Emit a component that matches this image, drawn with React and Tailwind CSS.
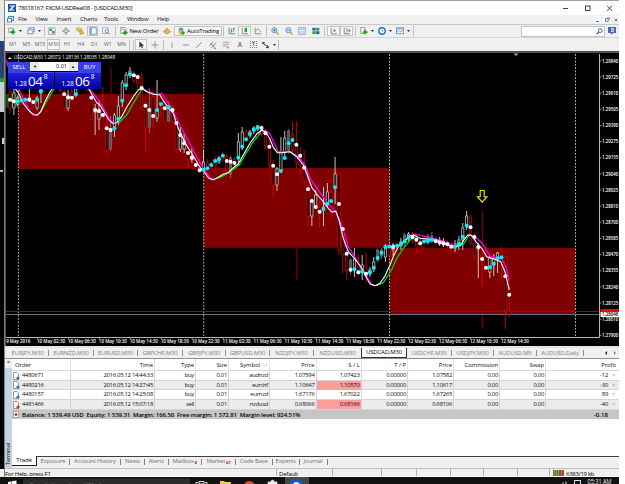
import React from 'react';

const WHITE = '#d8d8d8';
const RED = '#d80000';

// one row per bar: [dot y, dot colour, high, low, body top, body bottom, kind]
// kind: r = bear, w = bull, f = filled grey
const BARS = [
  [99.7, 'w', 88, 113, 92, 108, 'r'], [101.3, 'w', 88, 115, 93, 108, 'w'], [101.3, 'c', 96, 106, 98, 104, 'w'],
  [100.5, 'c', 97, 105, 99, 103, 'r'], [99.7, 'c', 97, 103, 98, 102, 'r'], [99.7, 'w', 89, 102, 98, 101, 'w'],
  [102, 'w', 97, 108, 99, 105, 'r'], [99.7, 'c', 96, 110, 98, 108, 'w'], [91.3, 'c', 88, 103, 89, 93, 'w'],
  [82, 'c', 76, 86, 78, 84, 'w'], [78, 'c', 74, 84, 76, 82, 'w'], [77, 'c', 72, 82, 74, 80, 'w'],
  [79, 'w', 74, 84, 76, 82, 'r'], [84, 'w', 76, 92, 80, 90, 'r'], [94.3, 'w', 89, 109, 92, 108, 'r'],
  [97.3, 'w', 90, 111, 99, 108, 'w'], [97.7, 'w', 88, 101, 92, 99, 'r'], [94.3, 'c', 88, 97, 89, 95, 'w'],
  [84, 'c', 76, 88, 80, 86, 'w'], [80, 'c', 74, 86, 76, 82, 'w'], [84, 'w', 78, 91, 80, 90, 'r'],
  [97.7, 'w', 93, 121, 98, 119, 'r'], [110, 'w', 104, 135, 110, 112, 'w'], [111, 'w', 100, 130, 110, 119, 'w'],
  [115, 'w', 87, 119, 105, 117, 'r'], [128.3, 'w', 112, 156, 131, 150, 'r'], [130, 'w', 116, 151, 129, 149, 'f'],
  [128.3, 'c', 113, 137, 115, 128, 'w'], [119, 'c', 96, 125, 106, 119, 'w'], [100.7, 'c', 80, 107, 83, 100, 'w'],
  [85.3, 'c', 72, 90, 75, 85, 'w'], [74.3, 'c', 67, 78, 71, 75, 'w'], [75.3, 'w', 71, 83, 74, 81, 'r'],
  [77, 'w', 74, 91, 77, 83, 'r'], [88, 'w', 73, 110, 78, 107, 'r'], [105.7, 'w', 103, 153, 106, 127, 'r'],
  [110, 'w', 88, 133, 110, 127, 'f'], [116, 'w', 90, 129, 97, 117, 'r'], [110, 'c', 80, 122, 110, 118, 'w'],
  [104, 'c', 94, 118, 98, 106, 'r'], [108.3, 'w', 101, 122, 104, 121, 'r'], [107, 'c', 101, 122, 108, 121, 'f'],
  [110, 'w', 105, 124, 108, 121, 'r'], [123, 'w', 113, 153, 115, 149, 'r'], [135, 'w', 127, 152, 135, 149, 'w'],
  [143.3, 'w', 133, 153, 140, 149, 'w'], [153, 'w', 144, 168, 149, 159, 'r'], [157.7, 'w', 148, 163, 156, 159, 'w'],
  [165, 'w', 153, 168, 158, 166, 'r'], [170.3, 'w', 157, 173, 164, 171, 'r'], [169.7, 'c', 150, 172, 162, 170, 'w'],
  [168.3, 'c', 159, 170, 163, 169, 'r'], [165, 'c', 162, 169, 164, 167, 'r'], [161, 'c', 156, 169, 159, 166, 'r'],
  [159.3, 'c', 156, 164, 158, 162, 'w'], [155.7, 'c', 152, 162, 154, 159, 'r'], [161, 'w', 154, 177, 157, 170, 'r'],
  [161.7, 'w', 156, 178, 158, 174, 'f'], [163, 'w', 157, 170, 159, 165, 'r'], [157.7, 'c', 133, 166, 142, 157, 'w'],
  [146.7, 'c', 127, 150, 132, 146, 'w'], [139.3, 'c', 129, 143, 132, 140, 'r'], [134, 'c', 130, 138, 132, 135, 'w'],
  [129.7, 'c', 126, 134, 128, 131, 'w'], [127.3, 'c', 125, 131, 126, 129, 'w'], [128, 'w', 125, 136, 127, 134, 'r'],
  [133.3, 'w', 129, 150, 132, 146, 'r'], [146.7, 'w', 139, 169, 147, 165, 'r'], [165.7, 'w', 160, 198, 166, 185, 'r'],
  [174.3, 'w', 167, 191, 169, 185, 'w'], [171, 'c', 137, 173, 152, 171, 'w'], [158, 'c', 131, 159, 138, 152, 'w'],
  [143.3, 'c', 129, 153, 131, 150, 'f'], [140, 'c', 122, 152, 134, 150, 'r'], [144.7, 'w', 121, 169, 145, 162, 'r'],
  [155.7, 'w', 147, 174, 155, 165, 'r'], [167.7, 'w', 150, 184, 168, 181, 'r'], [189.3, 'w', 177, 227, 189, 216, 'r'],
  [201, 'w', 199, 226, 201, 216, 'w'], [207, 'w', 190, 209, 195, 207, 'w'], [211.7, 'w', 200, 227, 208, 213, 'r'],
  [209, 'c', 187, 226, 207, 210, 'w'], [203.7, 'c', 183, 207, 192, 203, 'w'], [201, 'c', 190, 219, 193, 209, 'r'],
  [187.3, 'c', 157, 204, 174, 187, 'w'], [204, 'w', 173, 255, 174, 250, 'r'], [229, 'w', 227, 273, 229, 255, 'r'],
  [253.7, 'w', 250, 280, 254, 271, 'r'], [269.7, 'w', 258, 275, 260, 270, 'f'], [269.3, 'c', 248, 277, 259, 269, 'w'],
  [272.3, 'w', 254, 276, 264, 274, 'r'], [271.7, 'c', 255, 280, 265, 272, 'w'], [273.7, 'w', 253, 283, 266, 275, 'r'],
  [272.3, 'c', 267, 277, 270, 274, 'w'], [267.7, 'c', 257, 272, 262, 269, 'w'], [258, 'c', 249, 262, 250, 260, 'f'],
  [252.7, 'c', 248, 259, 250, 256, 'f'], [247, 'c', 244, 262, 247, 257, 'w'], [246.5, 'c', 243, 259, 246, 255, 'r'],
  [247, 'w', 243, 256, 245, 250, 'w'], [245.7, 'c', 241, 249, 244, 247, 'r'], [244, 'c', 238, 250, 242, 246, 'w'],
  [241.3, 'c', 233, 246, 235, 243, 'f'], [237, 'c', 232, 242, 234, 239, 'w'], [237.3, 'w', 232, 243, 234, 240, 'r'],
  [239.7, 'w', 234, 254, 237, 247, 'r'], [243.3, 'w', 238, 253, 240, 250, 'r'], [241.3, 'c', 236, 250, 238, 244, 'r'],
  [241, 'c', 234, 245, 236, 243, 'f'], [239.7, 'c', 232, 243, 236, 241, 'f'], [241, 'w', 237, 245, 239, 243, 'r'],
  [242.3, 'w', 237, 246, 240, 244, 'w'], [243.3, 'w', 238, 247, 241, 245, 'w'], [244.3, 'w', 240, 248, 242, 246, 'r'],
  [246.7, 'w', 243, 253, 245, 250, 'r'], [246.7, 'c', 240, 252, 244, 248, 'w'], [243.7, 'c', 236, 250, 240, 246, 'w'],
  [237, 'c', 223, 250, 228, 240, 'w'], [225.7, 'c', 211, 230, 216, 226, 'w'], [227.3, 'w', 215, 245, 217, 243, 'r'],
  [237, 'w', 232, 259, 238, 256, 'r'], [247, 'w', 243, 278, 247, 249, 'w'], [259, 'w', 250, 287, 256, 262, 'r'],
  [267.7, 'w', 243, 273, 257, 271, 'r'], [267.3, 'c', 256, 278, 258, 272, 'w'], [263.7, 'c', 254, 276, 259, 265, 'w'],
  [258.3, 'c', 252, 273, 253, 260, 'w'], [257.3, 'c', 247, 282, 253, 262, 'r'], [276.3, 'w', 255, 329, 258, 311, 'r'],
  [294.7, 'w', 302, 317, 311, 314, 'r'],
];

const MA_MAIN = '13,86 18.3,92.7 23.3,103.3 28.3,110 33.3,114.7 37.3,115 40.7,111.7 45,101.7 49.3,93.3 53.3,87.3 58,80 70,76 82,80 88.3,88.3 93.3,96.7 96.7,102.7 100,105 104,111.7 108.3,119.3 112.7,123.3 116.7,122.7 121.7,116.7 126.7,107.3 133.3,96.7 138.3,90 141.7,88.3 146.7,91.7 153.3,94.3 160,95 164,101.7 169,108.3 173.3,113.3 178.3,128.3 185,142.7 193.3,156 200,167.3 203.5,171 208.3,177.7 212.3,179.7 216.7,178.3 223.3,174.3 228.3,172.7 233.3,167.7 238.3,164 243.3,155 250,143.3 256.7,134 261.7,130.3 266,132.3 270,139.3 273.3,147.3 277.3,152.7 281.7,152.7 290,151.7 296.7,156.7 303.3,165 306.7,173.3 311.7,187.3 318.3,196 323.3,201.7 328.3,208.3 332.3,212.3 335.7,211 339,220 343.3,238.3 348.3,251.7 355,259 361.7,268.3 366,276.7 370,284 375,285.7 380,283.3 385,276 390,265 394,255 398.3,246.7 405,240.7 410,236 413.3,235 420,238.3 430,239.3 443.3,242.7 451.7,246.7 460,245.7 465,238.3 468.3,234.7 471.7,235.7 476.7,242.7 481.7,248.3 486.7,256.7 495,259.3 500.7,261.7 505,271.7 509.3,290';

const MA_DOWN = [
  '6,60 8,66 14,80 19.3,90 25,101.7 30,111.7 35,115 38.3,115',
  '90,89.3 98.3,100 101.7,105 110,120 114,123.3',
  '141.7,87.7 146.7,90.7 155,94 161.7,93.3 165,98.3 171.7,108.3 178.3,121.7 188.3,140.7 196.7,156.7 203.3,168.3 210,177.7 213,179.3',
  '261,130.7 266,130.7 270,134 275,145 278.3,151.7 290,151.7 298.3,156.7 305,165 310,178.3 318.3,190 326.7,201.7 336.7,213.3 340,220.7 343.3,229.7 348.3,246.7 356.7,260 366,275 371.7,284 375,285.7',
  '413.3,234 421.7,235.7 430,237.7 443.3,241 454,245',
  '469.3,234 475,236.7 481.7,242.7 486,249.3 490,256 501.7,258.7 506,266.7 509.3,280.7',
];

const MA_UP = [
  '39.5,113.5 43,108 48.3,98.3 53.3,90 58,83',
  '119,122.7 126.7,115 133.3,103.3 138.3,95 141.7,89.3',
  '213,179.7 221.7,176.7 230,171.7 239.3,165 245,155 253.3,141.7 261,132.3',
  '376,285.7 383.3,282.7 388.3,275 391.7,269.5 396.7,258.3 403.3,248.3 411.7,238.3',
  '457,246.3 463.3,244.3 469.3,235',
];

const PRICES = ['1.29840', '1.29725', '1.29610', '1.29505', '1.29390', '1.29275', '1.29155', '1.29040', '1.28925', '1.28810', '1.28700', '1.28585', '1.28470', '1.28355', '1.28240', '1.28125', '1.28010', '1.27900'];

const HOURS = ['02:30', '06:30', '10:30', '14:30', '18:30', '22:30'];
const TIMES = [
  ...HOURS.map((h) => `10 May ${h}`),
  ...HOURS.map((h) => `11 May ${h}`),
  ...HOURS.slice(0, 4).map((h) => `12 May ${h}`),
];

const Bar = ({ bar, index }) => {
  const [, , high, low, top, bottom, kind] = bar;
  const x = 10 + index * 3.87;
  const color = kind === 'r' ? RED : kind === 'w' ? WHITE : '#777777';
  return (
    <g stroke={color}>
      <line x1={x} x2={x} y1={high} y2={low} strokeWidth="0.9" />
      <rect x={x - 1.1} y={top} width="2.2" height={Math.max(bottom - top, 1)} fill={kind === 'f' ? '#555555' : '#000000'} strokeWidth="0.7" />
    </g>
  );
};

const Chart = () => (
  <svg className="block" width="613" height="293" viewBox="6 53 613 293" fontFamily="'Open Sans', sans-serif">
    <rect x="6" y="53" width="613" height="293" fill="#000000" />
    <rect x="6" y="94" width="12.3" height="13.5" fill="#005a00" />
    <g fill="#800000">
      <rect x="18.3" y="94" width="185.4" height="75" />
      <rect x="203.7" y="168" width="185.8" height="79.8" />
      <rect x="389.5" y="248" width="185.8" height="66" />
    </g>
    <path d="M111 67v40M296.8 248v32M482.3 211v76M482.3 314v15" fill="none" stroke="#960000" />
    <g stroke="#c8c8c8" strokeWidth="0.9" strokeDasharray="1.8 1.5">
      <line x1="18.4" x2="18.4" y1="54" y2="336" />
      <line x1="203.7" x2="203.7" y1="54" y2="336" />
      <line x1="389.5" x2="389.5" y1="54" y2="336" />
      <line x1="575.5" x2="575.5" y1="54" y2="336" />
    </g>
    <line x1="6" x2="599" y1="311.5" y2="311.5" stroke="#b00000" />
    <line x1="6" x2="599" y1="314.5" y2="314.5" stroke="#66727e" />
    {BARS.map((bar, i) => <Bar key={i} bar={bar} index={i} />)}
    <g fill="none" strokeWidth="1.3" strokeLinejoin="round">
      {MA_DOWN.map((points) => <polyline key={points} points={points} stroke="#f000f0" />)}
      {MA_UP.map((points) => <polyline key={points} points={points} stroke="#00d800" />)}
      <polyline points={MA_MAIN} stroke="#ffffff" strokeWidth="1.1" />
    </g>
    {BARS.map((bar, i) => (
      <circle key={i} cx={10 + i * 3.87} cy={bar[0]} r="2" fill={bar[1] === 'c' ? '#00f0ff' : '#ffffff'} />
    ))}
    <path d="M480.2 190.5h4v6.2h2.8l-4.8 5.4-4.8-5.4h2.8z" fill="none" stroke="#f4e800" strokeWidth="1.1" />
    <path d="M513.5 53.5h5l-2.5 2.5z" fill="#9aaac0" />
    <path d="M6 337.5H599.5V54" fill="none" stroke="#b4b4b4" />
    <path d="M8 59l1.8-2 1.8 2z" fill="#ffffff" />
    <text x="14" y="59" fontSize="5" fill="#ffffff" textLength="101" lengthAdjust="spacingAndGlyphs">USDCAD,M30  1.28072 1.28136 1.28035 1.28048</text>
    {PRICES.map((price, i) => (
      <g key={price}>
        <line x1="600" x2="601.5" y1={60.8 + i * 16.15} y2={60.8 + i * 16.15} stroke="#b4b4b4" strokeWidth="0.8" />
        <text x="602" y={62.5 + i * 16.15} fontSize="4.4" fontWeight="600" fill="#ffffff">{price}</text>
      </g>
    ))}
    <rect x="600.5" y="309" width="18.5" height="3.5" fill="#ff0000" />
    <rect x="600.5" y="312" width="18.5" height="5" fill="#ffffff" />
    <text x="602" y="316.2" fontSize="4.4" fontWeight="600" fill="#000000">1.28048</text>
    <text x="6.2" y="343.2" fontSize="5" fontWeight="600" fill="#ffffff" textLength="24" lengthAdjust="spacingAndGlyphs">9 May 2016</text>
    {TIMES.map((time, i) => (
      <g key={time}>
        <line x1={37.5 + i * 30.93} x2={37.5 + i * 30.93} y1="337.5" y2="339" stroke="#b4b4b4" strokeWidth="0.8" />
        <text x={37 + i * 30.93} y="343.2" fontSize="5" fontWeight="600" fill="#ffffff" textLength="28" lengthAdjust="spacingAndGlyphs">{time}</text>
      </g>
    ))}
  </svg>
);

const Quote = ({ big }) => (
  <div className="flex-1 flex items-end justify-center pb-[1px] border-t border-[#3c46f0] bg-gradient-to-b from-[#2020d8] to-[#0000a0] text-white leading-none">
    <span className="text-[6.3px] mb-[1px] mr-[1px]">1.28</span>
    <span className="text-[13.5px] leading-[13px] tracking-[-0.3px]">{big}</span>
    <span className="text-[6.5px] self-start mt-[1px] ml-[1px]">8</span>
  </div>
);

const OneClick = () => (
  <div className="absolute left-[2px] top-[9px] w-[93px] h-[27px] flex flex-col bg-black">
    <div className="h-[10px] flex text-[6px] leading-[10px] text-white">
      <div className="w-[22px] text-center bg-[#3840e8]">SELL</div>
      <div className="w-[48px] h-[9px] flex bg-white text-black px-px leading-[9px]">
        <span className="w-[8px] bg-[#e6e6e6] text-center text-[4px]">▼</span>
        <span className="flex-1 text-right pr-[2px] text-[5.5px]">0.01</span>
        <span className="w-[8px] bg-[#e6e6e6] text-center text-[4px]">▲</span>
      </div>
      <div className="flex-1 text-center bg-[#3840e8]">BUY</div>
    </div>
    <div className="flex-1 flex gap-px">
      <Quote big="04" />
      <Quote big="06" />
    </div>
  </div>
);

// toolbar glyphs, all drawn on a 10x10 grid
const ICONS = {
  newChart: <><rect x="1" y="1.5" width="6" height="5" fill="#fff" stroke="#68a068" /><path d="M6 3.5v6M3 6.5h6" stroke="#18a028" strokeWidth="2.2" /></>,
  profiles: <><rect x="2.5" y="1" width="6.5" height="5" fill="#dcecf8" stroke="#5888b8" /><rect x="1" y="3.5" width="6.5" height="5" fill="#eef6fc" stroke="#5888b8" /></>,
  market: <><rect x="1" y="1" width="8" height="8" fill="#f4faff" stroke="#68a8c8" /><rect x="2" y="2" width="3" height="3" fill="#28a040" /><rect x="5" y="5" width="3" height="3" fill="#d04820" /></>,
  crosshair: <g fill="none" stroke="#808080"><circle cx="5" cy="5" r="2.8" /><path d="M5 0v4M5 6v4M0 5h4M6 5h4" /></g>,
  navigator: <><path d="M1 1h3l1 1h2v3H1z" fill="#f0cc50" stroke="#b09020" strokeWidth=".7" /><path d="M4.5 4.5h3l2 4-4.5.5z" fill="#f0b840" stroke="#a07818" strokeWidth=".7" /></>,
  terminal: <><rect x="1" y="1" width="8" height="8" fill="#fff" stroke="#5080c0" /><path d="M2.5 1v8" stroke="#5080c0" strokeWidth="1.5" /></>,
  tester: <><rect x=".5" y="1" width="7" height="7" fill="#eef4fa" stroke="#88a8c8" /><circle cx="6" cy="5.5" r="2" fill="#fff" stroke="#607890" /><path d="M7.5 7l2 2" stroke="#c0a030" strokeWidth="1.4" /></>,
  order: <><path d="M1 .5h5l1.5 1.5V8H1z" fill="#fff" stroke="#606060" strokeWidth=".8" /><path d="M2.5 3h3" stroke="#777" /><path d="M6.5 4v6M3.5 7h6" stroke="#18a028" strokeWidth="2" /></>,
  editor: <path d="M.5 6L5 1.5 9.5 6 5 8.5z" fill="#e8b838" stroke="#a07818" strokeWidth=".8" />,
  auto: <><circle cx="5" cy="3.5" r="3" fill="#48a0d0" /><path d="M1 5l4-1 4 2-2 3.5H2.5z" fill="#e8c040" /><circle cx="7.5" cy="7.5" r="2.2" fill="#20a040" /></>,
  bars: <path d="M1.5 1v7.5H9M4.5 2v5M3.5 5h1M7 1v5M7 2h1.5" fill="none" stroke="#308038" />,
  candles: <><path d="M1.5 1v7.5H9" fill="none" stroke="#607060" /><rect x="4.5" y="1" width="3" height="5.5" fill="#18a828" /></>,
  line: <path d="M1.5 1v7.5H9M2 5l2.5-2.5L7 4.5l2 2" fill="none" stroke="#589060" />,
  zoomIn: <><path d="M6 6l3.5 3.5" stroke="#c8a030" strokeWidth="1.8" /><circle cx="4.2" cy="4" r="3.2" fill="#d8f0fc" stroke="#3080c8" /><path d="M2.5 4h3.4M4.2 2.3v3.4" stroke="#2060a8" /></>,
  zoomOut: <><path d="M6 6l3.5 3.5" stroke="#c8a030" strokeWidth="1.8" /><circle cx="4.2" cy="4" r="3.2" fill="#d8f0fc" stroke="#3080c8" /><path d="M2.5 4h3.4" stroke="#2060a8" /></>,
  grid: <><rect x="1" y="1" width="8" height="8" fill="#eaf4fc" stroke="#6098c8" /><path d="M2 3h6M4 5v3M6.5 5v3" stroke="#90b8d8" /></>,
  tile: <><rect x=".5" y="1" width="4" height="3.5" fill="#2858b8" /><rect x="5.2" y="1" width="4" height="3.5" fill="#28a030" /><rect x=".5" y="5.3" width="4" height="3.5" fill="#28a030" /><rect x="5.2" y="5.3" width="4" height="3.5" fill="#2858b8" /></>,
  scroll: <><path d="M1.5 1v7.5H9" fill="none" stroke="#607060" /><path d="M4.5 2.5v4l3-2z" fill="#18a028" /></>,
  shift: <><path d="M1.5 1v7.5H9M5 1v6" fill="none" stroke="#506070" /><path d="M9 2.5v4l-3-2z" fill="#c05028" /></>,
  indicator: <><path d="M1 .5h5V8H1z" fill="#fff" stroke="#606060" strokeWidth=".8" /><path d="M6.5 3.5v6M3.5 6.5h6" stroke="#18b028" strokeWidth="2.2" /></>,
  clock: <><circle cx="5" cy="5" r="4" fill="#fff" stroke="#2070c8" strokeWidth="1.7" /><path d="M5 2.8V5h1.8" fill="none" stroke="#406080" strokeWidth=".8" /></>,
  template: <><rect x=".5" y="1" width="9" height="7.5" fill="#e4f2fc" stroke="#5890c0" /><path d="M1 2.2h8" stroke="#5890c0" /><path d="M1.5 6l2-2 2 2 3-2" fill="none" stroke="#b06040" strokeWidth=".8" /></>,
  cursor: <path d="M3 .5v8l2-2 1.3 3 1.2-.6L6.2 6H9z" fill="#303030" />,
  cross: <path d="M5 .5v9M.5 5h9" stroke="#707070" strokeWidth=".9" />,
  vline: <path d="M5 1.5v7" stroke="#808080" />,
  hline: <path d="M1.5 5h7" stroke="#707070" />,
  trend: <path d="M1.5 8.5l7-7" stroke="#707070" />,
  channel: <path d="M.5 6l5-5M3 8.5L9 2M2 3l4 4M7 7v2.5h2" fill="none" stroke="#606060" strokeWidth=".9" />,
  fibo: <path d="M1 1.5h8M1 4h8M1 6.5h5M7 6.5v3M6 8h3" stroke="#808080" strokeWidth=".8" />,
  arrows: <path d="M1 2l3 3M1 2h2.5M1 2v2M4 5l4 2.5M5 8l3 .5-1-3" fill="none" stroke="#303030" strokeWidth="1.2" />,
};

const Icon = ({ name }) => (
  <svg className="w-[8px] h-[8px] shrink-0" viewBox="0 0 10 10">{ICONS[name]}</svg>
);

const Tool = ({ icon, width, boxed, caret, children }) => (
  <div className={`${width} h-full flex items-center justify-center shrink-0 text-[5.2px] text-[#606060] ${boxed ? 'bg-[#f8f8f8] border border-[#c4c4c4]' : ''}`}>
    {icon && <Icon name={icon} />}
    {children}
    {caret && <svg className="w-[3px] h-[2px] ml-[3px]" viewBox="0 0 3 2"><path d="M0 0h3L1.5 2z" fill="#303030" /></svg>}
  </div>
);

const Divider = ({ margin = 'mx-[1px]' }) => <div className={`w-px h-[10px] bg-[#c0c0c0] shrink-0 ${margin}`} />;

const MENU = [['File', 'w-[17.5px]'], ['View', 'w-[21px]'], ['Insert', 'w-[23.5px]'], ['Charts', 'w-[24px]'], ['Tools', 'w-[23px]'], ['Window', 'w-[30px]'], ['Help', 'w-[20px]']];

const CHART_TABS = [
  ['EURJPY,M30', 'w-[44px] pl-[2px]'], ['EURNZD,M30', 'w-[45px]'], ['EURUSD,M30', 'w-[44px]'], ['GBPCHF,M30', 'w-[45px]'],
  ['GBPJPY,M30', 'w-[43px]'], ['GBPUSD,M30', 'w-[44px]'], ['NZDJPY,M30', 'w-[44px]'], ['NZDUSD,M30', 'w-[47px]'],
  ['USDCAD,M30', 'w-[46px]'], ['USDCHF,M30', 'w-[45px]'], ['USDJPY,M30', 'w-[42px]'], ['AUDUSD,M5', 'w-[43px]'], ['AUDUSD,Daily', 'w-[47px]'],
];

const TERMINAL_TABS = [
  ['Exposure', 'w-[33px]'], ['Account History', 'w-[51px]'], ['News', 'w-[24px]'], ['Alerts', 'w-[23.5px]'], ['Mailbox', 'w-[33.5px]', '8'],
  ['Market', 'w-[34px]', '67'], ['Code Base', 'w-[36.5px]'], ['Experts', 'w-[27px]'], ['Journal', 'w-[28px]'],
];

const ORDERS = [
  ['4480671', '2016.05.12 14:44:33', 'buy', '0.01', 'audnzd', '1.07594', '1.07423', '0.00000', '1.07582', '0.00', '0.00', '-12'],
  ['4480216', '2016.05.12 14:27:45', 'buy', '0.01', 'eurchf', '1.10647', '1.10570', '0.00000', '1.10617', '0.00', '0.00', '-30'],
  ['4480157', '2016.05.12 14:25:08', 'buy', '0.01', 'eurnzd', '1.67176', '1.67022', '0.00000', '1.67265', '0.00', '0.00', '89'],
  ['4481466', '2016.05.12 15:07:18', 'sell', '0.01', 'nzdusd', '0.68066', '0.68166', '0.00000', '0.68106', '0.00', '0.00', '-40'],
];

const HEADERS = ['Order', 'Time', 'Type', 'Size', 'Symbol', 'Price', 'S / L', 'T / P', 'Price', 'Commission', 'Swap', 'Profit'];
const COLS = 'grid grid-cols-[59px_84px_41px_33px_41px_46.5px_45px_46.5px_46px_46px_46px_1fr]';

const OrderIcon = ({ color }) => (
  <svg className="w-[7px] h-[8px] mr-[2px] shrink-0" viewBox="0 0 7 8">
    <path d="M.5.5h3.5l1.5 1.5v5.5h-5z" fill="#fff" stroke="#707070" strokeWidth=".7" />
    <circle cx="5" cy="6" r="1.6" fill={color} />
  </svg>
);

const OrdersTable = () => (
  <div className="flex-1 bg-white text-[5.9px] leading-[9px] text-[#101010]">
    <div className={`${COLS} h-[12px] leading-[12px] border-b border-[#d8d8d8]`}>
      {HEADERS.map((title, i) => (
        <div key={i} className={`tracking-[-0.05px] border-r border-[#e4e4e4] ${i === 0 ? 'pl-[3px]' : i === 4 ? 'text-right pr-[9px] relative' : i === 11 ? 'text-right pr-[3px] border-r-0' : 'text-right pr-[1px]'}`}>
          {title}
          {i === 4 && <span className="absolute right-[3px] text-[#999]">⁄</span>}
        </div>
      ))}
    </div>
    {ORDERS.map((order, row) => (
      <div key={order[0]} className={`${COLS} h-[9.7px] tracking-[-0.28px] border-b border-[#d4d4d4] ${row % 2 ? 'bg-[#ececec]' : 'bg-white'}`}>
        {order.map((value, i) => (
          <div
            key={i}
            className={`flex items-center border-r border-[#d4d4d4] ${i === 0 ? 'pl-[1px]' : 'justify-end pr-[1px]'} ${i === 6 && row % 2 ? 'bg-[#ff9c9c]' : ''} ${i === 11 ? 'border-r-0' : ''}`}
          >
            {i === 0 && <OrderIcon color={row === 3 ? '#d83010' : '#1878d0'} />}
            {value}
            {i === 11 && <span className="w-[10px] pl-[4px] text-[#999]">×</span>}
          </div>
        ))}
      </div>
    ))}
    <div className="h-[9px] flex items-center bg-[#c6c6c6] pl-[1px] text-[6.1px] font-semibold text-black">
      <svg className="w-[7px] h-[7px] mr-[2px]" viewBox="0 0 7 7"><rect x=".5" y=".5" width="5" height="6" fill="#fff" stroke="#888" strokeWidth=".6" /><path d="M3 2v3M1.5 3.5h3" stroke="#e02000" strokeWidth="1.3" /></svg>
      <span className="whitespace-pre tracking-[-0.14px]">Balance: 1 539.49 USD  Equity: 1 539.31  Margin: 166.50  Free margin: 1 372.81  Margin level: 924.51%</span>
      <span className="ml-auto pr-[11px]">-0.18</span>
    </div>
  </div>
);

const TitleBar = () => (
  <div className="h-[15px] flex items-center border-t border-[#a0a0a0] bg-white pl-[3px]">
    <svg className="w-[8px] h-[8px]" viewBox="0 0 8 8"><rect width="8" height="8" fill="#1858b0" /><path d="M2 2h4L2 6h4" fill="none" stroke="#fff" strokeWidth="1.2" /></svg>
    <span className="ml-[2px] text-[6px] text-black tracking-[-0.3px]">78018167: FXCM-USDReal08 - [USDCAD,M30]</span>
    <svg className="ml-auto mr-[6px] w-[50px] h-[6px]" viewBox="0 0 50 6" fill="none" stroke="#303030" strokeWidth="0.9">
      <path d="M0 3.5h5" /><rect x="22.5" y="1" width="4.5" height="4.5" /><path d="M44 .8l5 5M49 .8l-5 5" />
    </svg>
  </div>
);

const MenuBar = () => (
  <div className="h-[9px] flex items-center bg-[#f0f0f0] text-[6px] leading-[9px] text-[#101010] pl-[2px]">
    <svg className="w-[7px] h-[7px] mr-[4px]" viewBox="0 0 7 7"><rect x="1.5" y=".5" width="5" height="4" fill="#c8e0f4" stroke="#4888c0" /><rect x=".5" y="2.5" width="4" height="3.5" fill="#fff" stroke="#4888c0" /></svg>
    {MENU.map(([label, width]) => <span key={label} className={`${width} tracking-[-0.2px]`}>{label}</span>)}
    <div className="ml-auto flex gap-[2px]">
      <span className="w-[8px] h-[7px] bg-white flex items-end justify-center"><i className="w-[3px] h-px mb-[1px] bg-[#506888]" /></span>
      <span className="w-[8px] h-[7px] bg-white flex items-center justify-center"><svg className="w-[5px] h-[5px]" viewBox="0 0 5 5" fill="none" stroke="#506888" strokeWidth=".8"><rect x=".5" y="1.8" width="2.6" height="2.6" /><path d="M2 .8h2.5v2" /></svg></span>
      <span className="w-[6px] h-[7px] bg-white flex items-center justify-center"><svg className="w-[4px] h-[4px]" viewBox="0 0 4 4" stroke="#506888" strokeWidth=".9"><path d="M.5.5l3 3M3.5.5l-3 3" /></svg></span>
    </div>
  </div>
);

const MainToolbar = () => (
  <div className="h-[14px] flex items-center border-t border-[#c8c8c8] border-b border-b-[#d4d4d4] bg-[#f0f0f0] py-px">
    <Tool width="w-[20px]" icon="newChart" caret />
    <Tool width="w-[17px]" icon="profiles" caret />
    <Divider margin="ml-[2px] mr-[0px]" />
    <Tool width="w-[14px]" icon="market" />
    <Tool width="w-[13px]" icon="crosshair" />
    <Tool width="w-[15px]" icon="navigator" />
    <Tool width="w-[11px]" icon="terminal" boxed />
    <Tool width="w-[16px]" icon="tester" />
    <Divider margin="ml-[1px] mr-[2px]" />
    <Tool width="w-[42px]" icon="order"><span className="ml-[2px] text-[6px] whitespace-nowrap text-black tracking-[-0.2px]">New Order</span></Tool>
    <Tool width="w-[14px]" icon="editor" />
    <Tool width="w-[48px]" icon="auto" boxed><span className="ml-[2px] text-[6px] text-black tracking-[-0.2px]">AutoTrading</span></Tool>
    <Divider margin="ml-[1px] mr-[2px]" />
    <Tool width="w-[12px]" icon="bars" />
    <Tool width="w-[13px]" icon="candles" boxed />
    <Tool width="w-[14px]" icon="line" />
    <Divider margin="ml-[1px] mr-[1px]" />
    <Tool width="w-[14px]" icon="zoomIn" />
    <Tool width="w-[13px]" icon="zoomOut" />
    <Tool width="w-[14px]" icon="grid" />
    <Tool width="w-[14px]" icon="tile" />
    <Divider margin="ml-[1px] mr-[2px]" />
    <Tool width="w-[13px]" icon="scroll" boxed />
    <Tool width="w-[13px]" icon="shift" boxed />
    <Divider margin="ml-[2px] mr-[2px]" />
    <Tool width="w-[18px]" icon="indicator" caret />
    <Tool width="w-[18px]" icon="clock" caret />
    <Tool width="w-[18px]" icon="template" caret />
    <Divider />
    <div className="ml-auto w-[84px] h-[11px] bg-white border border-[#c4c4c4] flex items-center justify-end pr-[1px] shrink-0">
      <svg className="w-[7px] h-[7px]" viewBox="0 0 7 7" fill="none" stroke="#2868c8"><circle cx="4.2" cy="2.6" r="1.9" /><path d="M2.8 4L.6 6.3" strokeWidth="1.3" /></svg>
    </div>
    <div className="w-[14px] flex justify-center">
      <svg className="w-[8px] h-[8px]" viewBox="0 0 8 8"><path d="M0 0h8v6H5L3 8V6H0z" fill="#4868a8" /><path d="M3 1.5h2.3v3H3M3 3h2" fill="none" stroke="#fff" strokeWidth=".8" /></svg>
    </div>
  </div>
);

const PERIODS = ['M1', 'M5', 'M15', 'M30', 'H1', 'H4', 'D1', 'W1', 'MN'];

const DrawToolbar = () => (
  <div className="h-[13px] flex items-center bg-[#f0f0f0] py-px pl-[1px]">
    {PERIODS.map((period) => <Tool key={period} width="w-[13.6px]" boxed={period === 'M30'}>{period}</Tool>)}
    <Divider margin="ml-[1px] mr-[3px]" />
    <Divider margin="mr-[1px]" />
    <Tool width="w-[12px]" icon="cursor" boxed />
    <Tool width="w-[15px]" icon="cross" />
    <Divider margin="mx-[1px]" />
    <Tool width="w-[14px]" icon="vline" />
    <Tool width="w-[13px]" icon="hline" />
    <Tool width="w-[14px]" icon="trend" />
    <Tool width="w-[13px]" icon="channel" />
    <Tool width="w-[14px]" icon="fibo" />
    <Tool width="w-[13px]"><span className="text-[6.5px] font-semibold">A</span></Tool>
    <Tool width="w-[14px]"><span className="w-[7px] h-[7px] border border-dotted border-[#808080] text-[5px] leading-[5px] text-center font-bold">T</span></Tool>
    <Tool width="w-[18px]" icon="arrows" caret />
    <Divider margin="ml-[0px]" />
  </div>
);

const ChartTabs = () => (
  <div className="h-[13px] flex items-center border-t-2 border-[#e4e4e4] border-b border-b-[#909090] bg-[#f0f0f0] text-[6px] leading-[9px] text-[#808080] tracking-[-0.2px]">
    {CHART_TABS.map(([label, width], i) => (
      <div key={label} className={`${width} shrink-0 flex items-center justify-center h-full ${i === 8 ? 'bg-white text-black border border-t-0 border-[#303030]' : ''}`}>
        <span className="flex-1 text-center">{label}</span>
        {i !== 7 && i !== 8 && <i className="w-px h-[6px] bg-[#909090]" />}
      </div>
    ))}
    <svg className="ml-auto mr-[2px] w-[13px] h-[4px]" viewBox="0 0 13 4"><path d="M3 0v4L1 2z" fill="#202020" /><path d="M10 0v4l2-2z" fill="#808080" /></svg>
  </div>
);

const Terminal = () => (
  <div className="h-[109px] flex bg-[#f0f0f0]">
    <div className="w-[7px] flex flex-col items-center justify-between bg-[#c4d4e4]">
      <div className="w-full h-[9px] bg-[#f0f0f0] text-center text-[6px] leading-[6px] text-black">×</div>
      <span className="[writing-mode:vertical-rl] rotate-180 text-[5.8px] leading-[7px] mb-[3px] tracking-[-0.2px] text-black">Terminal</span>
    </div>
    <div className="flex-1 flex flex-col min-w-0">
      <OrdersTable />
      <div className="h-[12px] flex items-start text-[6px] leading-[9px] text-[#707070] tracking-[-0.15px]">
        <div className="w-[25px] h-[10px] bg-white border-r border-b border-[#202020] text-black text-center shrink-0">Trade</div>
        <div className="flex-1 h-[10px] flex border-t border-[#404040]">
          {TERMINAL_TABS.map(([label, width, badge]) => (
            <div key={label} className={`${width} flex items-center shrink-0`}>
              <span className="flex-1 text-center whitespace-nowrap">
                {label}
                {badge && <sub className="ml-[1px] text-[4px] leading-none font-bold text-red-600">{badge}</sub>}
              </span>
              <i className="w-px h-[6px] bg-[#808080]" />
            </div>
          ))}
        </div>
      </div>
    </div>
  </div>
);

const STATUS_CELLS = ['w-[56px]', 'w-[49px]', 'w-[35px]', 'w-[34px]', 'w-[33px]', 'w-[34px]', 'w-[32px]'];

const StatusBar = () => (
  <div className="h-[8px] flex border-t border-[#c0c0c0] bg-[#f0f0f0] text-[6px] leading-[11px] text-black overflow-hidden">
    <div className="w-[272px] border-r border-[#b0b0b0] tracking-[-0.25px]">For Help, press F1</div>
    {STATUS_CELLS.map((width, i) => (
      <div key={i} className={`${width} border-r border-[#b0b0b0] pl-[2px] shrink-0 tracking-[-0.2px]`}>{i === 0 && 'Default'}</div>
    ))}
    <div className="flex pl-[3px]">
      <svg className="w-[11px] h-[6px] mt-[1px] mr-[2px]" viewBox="0 0 11 6"><rect width="7" height="6" fill="#587820" /><rect x="7" width="4" height="6" fill="#b83828" /><path d="M1.5 0v6M3.5 0v6M5.5 0v6M8.5 0v6" stroke="#d8e0b0" strokeWidth=".4" /></svg>
      <span className="tracking-[-0.3px]">6383/19 kb</span>
    </div>
  </div>
);

const Taskbar = () => (
  <div className="h-[7px] w-[619px] flex bg-[#101212] overflow-hidden">
    <svg className="w-[619px] h-[7px]" viewBox="0 0 619 7" fontFamily="'Open Sans', sans-serif">
      <rect x="23" y="1.5" width="167" height="6" fill="#2b2d2d" />
      <path d="M8 5l3.5-.7V7H8zM12 4.2l4.5-.8V7H12z" fill="#ffffff" />
      <text x="30" y="9.6" fontSize="6" fill="#9a9a9a">Search the web and Windows</text>
      <path d="M196 7V5.5h2M205 5.5h2V7M199 4.5h5V7h-5z" fill="none" stroke="#e0e0e0" />
      <path d="M220 4h4l1 1h6v2h-11z" fill="#f4cc40" />
      <path d="M244.5 7a5 4.5 0 0 1 9.5 0z" fill="#e04838" />
      <path d="M268 7V5h9v2zM270.5 5q2-4 4 0" fill="#e8e8e8" stroke="#e8e8e8" strokeWidth=".7" />
      <rect x="285" y="0" width="24" height="7" fill="#464848" />
      <path d="M290.5 7q0-5 6-5t6 5z" fill="#1458c8" /><path d="M293 7q3-4 7 0z" fill="#fff" />
      <path d="M563 7V5.5M566 7V4.5" stroke="#e0e0e0" /><rect x="574.5" y="3.5" width="6" height="4" fill="none" stroke="#e0e0e0" />
      <text x="587.5" y="6.6" fontSize="6.2" fill="#f4f4f4" textLength="24" lengthAdjust="spacingAndGlyphs">05:31 AM</text>
    </svg>
  </div>
);

// slice of the desktop that shows left of the window
const DesktopEdge = () => (
  <div className="w-[4px] flex flex-col shrink-0">
    <div className="h-[41px] bg-[#e8e8e8]" />
    <div className="h-[37px] bg-[#2c4272]" />
    <div className="h-[4px] bg-[#20a030]" />
    <div className="h-[30px] bg-[#c8d0d4]" />
    <div className="h-[26px] bg-black" />
    <div className="h-[6px] bg-black flex justify-end"><i className="w-[2px] h-full bg-[#d0d0d0]" /></div>
    <div className="h-[26px] bg-black" />
    <div className="h-[2px] bg-black flex"><i className="w-[3px] h-full bg-[#b0b0b0]" /></div>
    <div className="flex-1 bg-black" />
    <div className="h-[8px] bg-[#f0f0f0]" />
  </div>
);

export default function App() {
  return (
    <div className="w-[625px] h-[484px] flex flex-col bg-white overflow-hidden font-['Open_Sans',sans-serif]">
      <div className="h-[477px] flex">
        <DesktopEdge />
        <div className="w-[615px] flex flex-col border-l border-[#808080]">
          <TitleBar />
          <MenuBar />
          <MainToolbar />
          <DrawToolbar />
          <div className="h-[2px] bg-[#505050]" />
          <div className="relative h-[293px] border-l border-[#505050]">
            <Chart />
            <OneClick />
          </div>
          <ChartTabs />
          <Terminal />
          <StatusBar />
        </div>
      </div>
      <Taskbar />
    </div>
  );
}
